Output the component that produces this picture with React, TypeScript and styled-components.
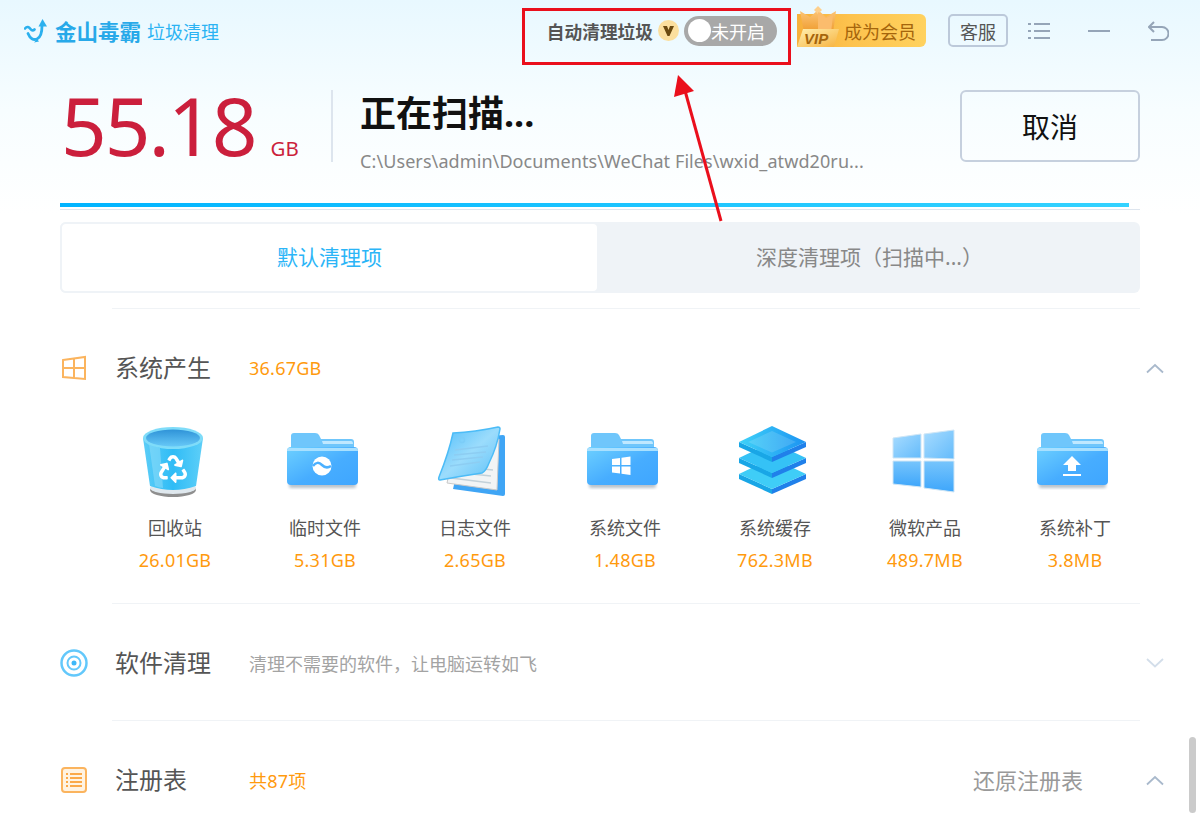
import * as React from 'react';
import styled, { createGlobalStyle } from 'styled-components';
import { FaRecycle } from 'react-icons/fa';

const FONT = '"Noto Sans", "Noto Sans CJK SC", sans-serif';

const GlobalStyle = createGlobalStyle`
  html, body {
    margin: 0;
    padding: 0;
    background: #fff;
    font-family: ${FONT};
  }
`;

const Page = styled.div`
  position: relative;
  width: 1200px;
  height: 840px;
  overflow: hidden;
  background: linear-gradient(#e8f8ff 0, #f7fdff 110px, #fff 215px);
`;

const Header = styled.header`
  display: flex;
  align-items: center;
  justify-content: space-between;
  height: 61px;
  padding: 0 31px 0 24px;
`;

const Brand = styled.div`
  display: flex;
  align-items: center;
  color: #2bb3f3;
`;

const BrandName = styled.span`
  margin-left: 7px;
  font-size: 21.5px;
  font-weight: 700;
  color: #27a9e9;
`;

const BrandPage = styled.span`
  margin-left: 6px;
  font-size: 18px;
`;

const Tools = styled.div`
  display: flex;
  align-items: center;
`;

const AutoLabel = styled.span`
  font-size: 17.7px;
  font-weight: 700;
  color: #555;
`;

const VBadge = styled.span`
  display: flex;
  align-items: center;
  justify-content: center;
  width: 21px;
  height: 21px;
  margin: 0 5px;
  border-radius: 50%;
  background: #fbdf9e;
`;

const Toggle = styled.div`
  display: flex;
  align-items: center;
  width: 93px;
  height: 30px;
  padding: 0 4px;
  box-sizing: border-box;
  border-radius: 15px;
  background: #a8a8a8;
  color: #fff;
  font-size: 18px;
`;

const Knob = styled.span`
  width: 23px;
  height: 23px;
  border-radius: 50%;
  background: #fff;
`;

const VipButton = styled.div`
  position: relative;
  display: flex;
  align-items: center;
  width: 129px;
  height: 33px;
  margin: 0 22px 0 20px;
  padding-left: 47px;
  box-sizing: border-box;
  border-radius: 0 6px 6px 0;
  background: linear-gradient(90deg, #f6b03c 0, #fdc24d 40%, #ffd25f 100%);
  color: #a5650c;
  font-size: 18px;
`;

const Crown = styled.svg`
  position: absolute;
  left: -1px;
  top: -8px;
`;

const ServiceButton = styled.div`
  display: flex;
  align-items: center;
  justify-content: center;
  width: 60px;
  height: 33px;
  box-sizing: border-box;
  border: 2px solid #bcc9da;
  border-radius: 5px;
  color: #555;
  font-size: 18px;
`;

const WindowIcons = styled.div`
  display: flex;
  align-items: center;
  gap: 38px;
  margin-left: 20px;
`;

const Summary = styled.section`
  display: flex;
  align-items: center;
  height: 72px;
  margin: 29px 60px 0 61px;
`;

const Total = styled.div`
  display: flex;
  align-items: baseline;
  width: 272px;
  height: 72px;
  border-right: 2px solid #dde5ee;
  color: #cb1f3c;
  box-sizing: border-box;
`;

const TotalValue = styled.span`
  font-size: 80px;
  line-height: 70px;
  letter-spacing: -2px;
`;

const TotalUnit = styled.span`
  margin-left: 15px;
  font-size: 20.5px;
`;

const ScanInfo = styled.div`
  flex: 1;
  padding: 10px 0 0 27px;
`;

const ScanTitle = styled.div`
  font-size: 36px;
  line-height: 48px;
  font-weight: 700;
  color: #111;
`;

const ScanPath = styled.div`
  margin-top: 11px;
  font-size: 18px;
  line-height: 24px;
  color: #888;
  letter-spacing: 0.09px;
`;

const CancelButton = styled.div`
  display: flex;
  align-items: center;
  justify-content: center;
  width: 180px;
  height: 72px;
  box-sizing: border-box;
  border: 2px solid #c6d0de;
  border-radius: 6px;
  color: #111;
  font-size: 28px;
`;

const Progress = styled.div`
  margin: 41px 60px 0;
  height: 6px;
  border-bottom: 1px solid #dde5ee;
`;

const ProgressFill = styled.div`
  height: 4px;
  background: linear-gradient(90deg, #00b4ff, #33d2ff);
`;

const Tabs = styled.div`
  display: flex;
  height: 71px;
  margin: 12px 60px 0;
  border-radius: 6px;
  background: #eff3f7;
`;

const Tab = styled.div<{ $active?: boolean }>`
  display: flex;
  align-items: center;
  justify-content: center;
  flex: ${(p) => (p.$active ? '0 0 539px' : '1')};
  padding-bottom: 3px;
  box-sizing: border-box;
  border-radius: 6px;
  font-size: 21px;
  color: ${(p) => (p.$active ? '#2bb5f7' : '#888')};
  background: ${(p) => (p.$active ? '#fff' : 'transparent')};
  border: ${(p) => (p.$active ? '2px solid #eff3f7' : 'none')};
`;

const Section = styled.section<{ $open?: boolean }>`
  margin: 0 35px 0 60px;
  padding: 39px 0 ${(p) => (p.$open ? '31px' : '37px')};
`;

const Divider = styled.div<{ $first?: boolean }>`
  height: 1px;
  margin: ${(p) => (p.$first ? '15px 60px 0 112px' : '0 60px 0 112px')};
  background: #f0f3f6;
`;

const SectionHead = styled.div`
  display: flex;
  align-items: center;
  height: 40px;
`;

const SectionIcon = styled.span`
  display: flex;
  width: 55px;
`;

const SectionTitle = styled.h2`
  width: 134px;
  margin: 0 0 3px;
  font-size: 24px;
  font-weight: 400;
  color: #555;
`;

const SectionNote = styled.span<{ $muted?: boolean }>`
  flex: 1;
  font-size: 18px;
  letter-spacing: ${(p) => (p.$muted ? '0' : '0.25px')};
  color: ${(p) => (p.$muted ? '#a3a3a3' : '#ff9a0e')};
`;

const RestoreLink = styled.span`
  margin: 0 62px 3px 0;
  font-size: 22px;
  color: #999;
`;

const ChevronWrap = styled.span`
  display: flex;
  width: 20px;
`;

const ItemGrid = styled.div`
  display: grid;
  grid-template-columns: repeat(7, 150px);
  margin: 34px 0 0 40px;
`;

const Item = styled.div`
  display: flex;
  flex-direction: column;
  align-items: center;
`;

const ItemLabel = styled.div`
  margin-top: 14px;
  font-size: 18px;
  line-height: 24px;
  color: #555;
`;

const ItemSize = styled.div`
  margin-top: 8px;
  font-size: 18px;
  line-height: 24px;
  letter-spacing: 0.25px;
  color: #ff9a0e;
`;

const ScrollThumb = styled.div`
  position: absolute;
  left: 1189px;
  top: 737px;
  width: 7px;
  height: 76px;
  border-radius: 4px;
  background: #cbcbcb;
`;

const CalloutBox = styled.div`
  position: absolute;
  left: 522px;
  top: 8px;
  width: 269px;
  height: 57px;
  box-sizing: border-box;
  border: 3px solid #ea0f1c;
`;

const CalloutArrow = styled.svg`
  position: absolute;
  left: 660px;
  top: 65px;
`;

function LogoMark() {
  return (
    <svg width="24" height="24" viewBox="0 0 24 24" fill="none">
      <path d="M1 9.500c2-2.500 4-1.500 5.500 .5s3 1.500 4 .5" stroke="#2bb0ee" strokeWidth="2.600" strokeLinecap="round" />
      <path d="M4 14.500c2 5 5.500 7 9 5.500 3.500-1.500 5-6 5-13" stroke="#2bb0ee" strokeWidth="2.800" strokeLinecap="round" />
      <path d="M18.500 0l4.500 7.500h-8.500z" fill="#2bb0ee" />
      <path d="M13 20l-3 3.500 5-1z" fill="#2bb0ee" />
    </svg>
  );
}

function CrownIcon() {
  return (
    <Crown width="44" height="42" viewBox="0 0 44 42">
      <defs>
        <linearGradient id="crownFill" x1="0" y1="0" x2="0" y2="1">
          <stop offset="0" stopColor="#fcc679" />
          <stop offset="1" stopColor="#ef9a2b" />
        </linearGradient>
        <linearGradient id="crownBase" x1="0" y1="0" x2="1" y2="1">
          <stop offset="0" stopColor="#fff0b0" />
          <stop offset="1" stopColor="#f7b23f" />
        </linearGradient>
      </defs>
      <path d="M4 5l10 6 8-7 8 7 10-6-3 22H8z" fill="url(#crownFill)" />
      <path d="M18 4l4-4 4 4-4 4z" fill="#fdd08d" />
      <path d="M22 6l8 6 7-3-2 18H22z" fill="#fbbc6d" />
      <path d="M7 23h36l-5 18H1z" fill="url(#crownBase)" />
      <text x="8" y="38" fontFamily="Liberation Sans, sans-serif" fontSize="15" fontWeight="700" fontStyle="italic" fill="#a5650c">
        VIP
      </text>
    </Crown>
  );
}

function FolderIcon({ id, children }: { id: string; children: React.ReactNode }) {
  return (
    <svg width="80" height="80" viewBox="0 0 80 80">
      <defs>
        <linearGradient id={id} x1="0" y1="0" x2="1" y2="1">
          <stop offset="0" stopColor="#6dd0ff" />
          <stop offset="0.55" stopColor="#47adff" />
          <stop offset="1" stopColor="#3fa6ff" />
        </linearGradient>
        <filter id={`${id}-s`} x="-10%" y="-10%" width="120%" height="130%">
          <feGaussianBlur stdDeviation="1.500" />
        </filter>
      </defs>
      <rect x="4" y="60" width="67" height="6" rx="2" fill="#8a9aa8" opacity="0.6" filter={`url(#${id}-s)`} />
      <path d="M6 28V14q0-3 3-3h21q3 0 4 2l2 4h30q3 0 3 3v8z" fill="#6fc6fb" />
      <path d="M37 19h29q2 0 2 3H38z" fill="#bfe8ff" />
      <rect x="2" y="25" width="71" height="38" rx="4" fill={`url(#${id})`} />
      <path d="M4 26h67q2 0 2 3H2q0-3 2-3z" fill="#a8e0ff" />
      {children}
    </svg>
  );
}

function BinIcon() {
  return (
    <svg width="80" height="80" viewBox="0 0 80 80">
      <defs>
        <linearGradient id="binBody" x1="0" y1="0" x2="1" y2="0">
          <stop offset="0" stopColor="#5ccdf7" />
          <stop offset="0.5" stopColor="#2fbcf6" />
          <stop offset="1" stopColor="#5ecff8" />
        </linearGradient>
        <linearGradient id="binInner" x1="0" y1="0" x2="0" y2="1">
          <stop offset="0" stopColor="#2f93d8" />
          <stop offset="1" stopColor="#66c8f7" />
        </linearGradient>
      </defs>
      <ellipse cx="38" cy="68" rx="23" ry="7" fill="#8f8f8f" />
      <ellipse cx="38" cy="66" rx="23" ry="6" fill="#dfe8ee" />
      <path d="M8 16l7 48q23 8 46 0l7-48z" fill="url(#binBody)" />
      <path d="M14 22l6 42q5 2 8 2l-3-40z" fill="#8edcf9" opacity="0.55" />
      <ellipse cx="38" cy="16" rx="30" ry="11" fill="#7fdcf9" />
      <ellipse cx="38" cy="16" rx="27" ry="8.500" fill="url(#binInner)" />
      <FaRecycle x="24" y="33" size={28} color="#fff" />
    </svg>
  );
}

function LogIcon() {
  return (
    <svg width="80" height="80" viewBox="0 0 80 80">
      <defs>
        <linearGradient id="logFlap" x1="0" y1="0" x2="1" y2="1">
          <stop offset="0" stopColor="#4fbdfa" />
          <stop offset="0.5" stopColor="#9bdcfc" />
          <stop offset="1" stopColor="#5cc0f8" />
        </linearGradient>
      </defs>
      <path d="M30 16l38-3q2 0 2 2l0 57q0 2-2 2l-50-7z" fill="#3fa5f5" />
      <path d="M22 16l42 1-2 51-50-7z" fill="#f2f4f5" stroke="#c9c9c9" />
      <path d="M20 44l38 4M18 50l38 4M16 56l40 5" stroke="#c3d1d9" strokeWidth="1.500" />
      <path d="M18 11q22-1 45-6 2 0 2 2-3 18-11 34-3 8-7 10-20 3-42 7-2 0-1-3Q14 30 18 11z" fill="url(#logFlap)" stroke="#4cbcf7" strokeWidth="1.500" />
      <path d="M20 28l33-4M19 33l32-3M17 38l31-3M15 44l30-4" stroke="#8dcdf2" strokeWidth="1.500" />
      <circle cx="27" cy="18" r="2.500" fill="none" stroke="#7ccdf8" strokeWidth="1.500" />
    </svg>
  );
}

function LayersIcon() {
  const layer = (dy: number, top: string) => (
    <g transform={`translate(0 ${dy})`}>
      <path d="M4 20v5l33 15v-5z" fill="#19a6e6" />
      <path d="M71 20v5L37 40v-5z" fill="#2080ea" />
      <path d="M37 4l34 16-34 15L4 20z" fill={top} />
    </g>
  );
  return (
    <svg width="80" height="80" viewBox="0 0 80 80">
      <defs>
        <linearGradient id="layerTop" x1="0" y1="0" x2="1" y2="0">
          <stop offset="0" stopColor="#3fd2f8" />
          <stop offset="1" stopColor="#1c93f2" />
        </linearGradient>
      </defs>
      {layer(32, '#3fcdf7')}
      {layer(16, '#35c2f6')}
      {layer(0, 'url(#layerTop)')}
      <path d="M37 9l24 11-24 10.500L13 20z" fill="#fff" opacity="0.14" />
    </svg>
  );
}

function WinTileIcon() {
  return (
    <svg width="80" height="80" viewBox="0 0 80 80">
      <defs>
        <linearGradient id="tileA" x1="0" y1="0" x2="1" y2="1">
          <stop offset="0" stopColor="#a8dcff" />
          <stop offset="1" stopColor="#64bbfb" />
        </linearGradient>
        <linearGradient id="tileB" x1="0" y1="0" x2="0" y2="1">
          <stop offset="0" stopColor="#77c5fc" />
          <stop offset="1" stopColor="#3ea6fb" />
        </linearGradient>
      </defs>
      <path d="M8 16l28-4v24H8z" fill="url(#tileA)" stroke="#cfe6f6" />
      <path d="M39 12l30-4v29l-30-1z" fill="url(#tileA)" stroke="#cfe6f6" />
      <path d="M8 39h28v26l-28-3z" fill="url(#tileB)" stroke="#cfe6f6" />
      <path d="M39 39h30v31l-30-4z" fill="url(#tileB)" stroke="#cfe6f6" />
    </svg>
  );
}

const sections = [
  { label: '回收站', size: '26.01GB', icon: <BinIcon /> },
  {
    label: '临时文件',
    size: '5.31GB',
    icon: (
      <FolderIcon id="folderTemp">
        <circle cx="37" cy="44" r="9.500" fill="#fff" />
        <path d="M28 44c3-4 6-4 9-1s6 3 9 1" stroke="#4bb0ff" strokeWidth="2.500" fill="none" />
      </FolderIcon>
    ),
  },
  { label: '日志文件', size: '2.65GB', icon: <LogIcon /> },
  {
    label: '系统文件',
    size: '1.48GB',
    icon: (
      <FolderIcon id="folderSys">
        <path d="M27 37l8-1v7h-8zM36.500 35.800l9-1.300v8.500h-9zM27 44.500h8v7l-8-1zM36.500 44.500h9v8.500l-9-1.300z" fill="#fff" />
      </FolderIcon>
    ),
  },
  { label: '系统缓存', size: '762.3MB', icon: <LayersIcon /> },
  { label: '微软产品', size: '489.7MB', icon: <WinTileIcon /> },
  {
    label: '系统补丁',
    size: '3.8MB',
    icon: (
      <FolderIcon id="folderPatch">
        <path d="M37 34l9 9h-5v6h-8v-6h-5z" fill="#fff" />
        <rect x="28" y="52" width="18" height="2" fill="#fff" />
      </FolderIcon>
    ),
  },
];

function Chevron({ up, color }: { up?: boolean; color: string }) {
  return (
    <svg width="20" height="12" viewBox="0 0 20 12" fill="none">
      <path d={up ? 'M2 10.500L10 3l8 7.500' : 'M2 2l8 7.500L18 2'} stroke={color} strokeWidth="1.800" />
    </svg>
  );
}

export default function App() {
  return (
    <Page>
      <GlobalStyle />
      <Header>
        <Brand>
          <LogoMark />
          <BrandName>金山毒霸</BrandName>
          <BrandPage>垃圾清理</BrandPage>
        </Brand>
        <Tools>
          <AutoLabel>自动清理垃圾</AutoLabel>
          <VBadge>
            <svg width="11" height="10" viewBox="0 0 11 10">
              <path d="M0 0h4l1.500 4L7 0h4L6.500 10h-2z" fill="#6b4a10" />
            </svg>
          </VBadge>
          <Toggle>
            <Knob />
            未开启
          </Toggle>
          <VipButton>
            <CrownIcon />
            成为会员
          </VipButton>
          <ServiceButton>客服</ServiceButton>
          <WindowIcons>
            <svg width="22" height="18" viewBox="0 0 22 18" fill="none" stroke="#95a5b8" strokeWidth="2">
              <path d="M0 2h3M6 2h16M0 9h3M6 9h16M0 16h3M6 16h16" />
            </svg>
            <svg width="22" height="18" viewBox="0 0 22 18" fill="none" stroke="#95a5b8" strokeWidth="2">
              <path d="M0 9h22" />
            </svg>
            <svg width="21" height="20" viewBox="0 0 21 20" fill="none" stroke="#95a5b8" strokeWidth="2">
              <path d="M6 1L1 6l5 5M1 6h13a6 6 0 0 1 0 13H3" />
            </svg>
          </WindowIcons>
        </Tools>
      </Header>

      <Summary>
        <Total>
          <TotalValue>55.18</TotalValue>
          <TotalUnit>GB</TotalUnit>
        </Total>
        <ScanInfo>
          <ScanTitle>正在扫描...</ScanTitle>
          <ScanPath>C:\Users\admin\Documents\WeChat Files\wxid_atwd20ru...</ScanPath>
        </ScanInfo>
        <CancelButton>取消</CancelButton>
      </Summary>

      <Progress>
        <ProgressFill style={{ width: `${(1069 / 1080) * 100}%` }} />
      </Progress>

      <Tabs>
        <Tab $active>默认清理项</Tab>
        <Tab>深度清理项（扫描中...）</Tab>
      </Tabs>

      <Divider $first />
      <Section $open>
        <SectionHead>
          <SectionIcon>
            <svg width="28" height="28" viewBox="0 0 28 28" fill="none" stroke="#fbb45e" strokeWidth="2">
              <path d="M3 6l22-3v22L3 23zM14 5v19M3 14h22" />
            </svg>
          </SectionIcon>
          <SectionTitle>系统产生</SectionTitle>
          <SectionNote>36.67GB</SectionNote>
          <ChevronWrap>
            <Chevron up color="#a9b9cc" />
          </ChevronWrap>
        </SectionHead>
        <ItemGrid>
          {sections.map((item) => (
            <Item key={item.label}>
              {item.icon}
              <ItemLabel>{item.label}</ItemLabel>
              <ItemSize>{item.size}</ItemSize>
            </Item>
          ))}
        </ItemGrid>
      </Section>

      <Divider />
      <Section>
        <SectionHead>
          <SectionIcon>
            <svg width="28" height="28" viewBox="0 0 28 28" fill="none">
              <circle cx="14" cy="14" r="12.500" stroke="#63c8fb" strokeWidth="2.500" />
              <circle cx="14" cy="14" r="6.500" stroke="#63c8fb" strokeWidth="2" />
              <circle cx="14" cy="14" r="2.500" fill="#3db7f8" />
            </svg>
          </SectionIcon>
          <SectionTitle>软件清理</SectionTitle>
          <SectionNote $muted>清理不需要的软件，让电脑运转如飞</SectionNote>
          <ChevronWrap>
            <Chevron color="#d3deea" />
          </ChevronWrap>
        </SectionHead>
      </Section>

      <Divider />
      <Section>
        <SectionHead>
          <SectionIcon>
            <svg width="28" height="28" viewBox="0 0 28 28" fill="none">
              <rect x="2" y="2" width="24" height="24" rx="3" stroke="#fbb45e" strokeWidth="2" fill="#fff3e2" />
              <path d="M6 8h2M10 8h12M6 12h2M10 12h12M6 16h2M10 16h12M6 20h2M10 20h12" stroke="#fba948" strokeWidth="1.800" />
            </svg>
          </SectionIcon>
          <SectionTitle>注册表</SectionTitle>
          <SectionNote>共87项</SectionNote>
          <RestoreLink>还原注册表</RestoreLink>
          <ChevronWrap>
            <Chevron up color="#a9b9cc" />
          </ChevronWrap>
        </SectionHead>
      </Section>

      <ScrollThumb />
      <CalloutBox />
      <CalloutArrow width="80" height="160" viewBox="0 0 80 160" fill="none">
        <path d="M61 156L24 22" stroke="#ea0f1c" strokeWidth="3" />
        <path d="M18 10l16 16-20 6z" fill="#ea0f1c" />
      </CalloutArrow>
    </Page>
  );
}
